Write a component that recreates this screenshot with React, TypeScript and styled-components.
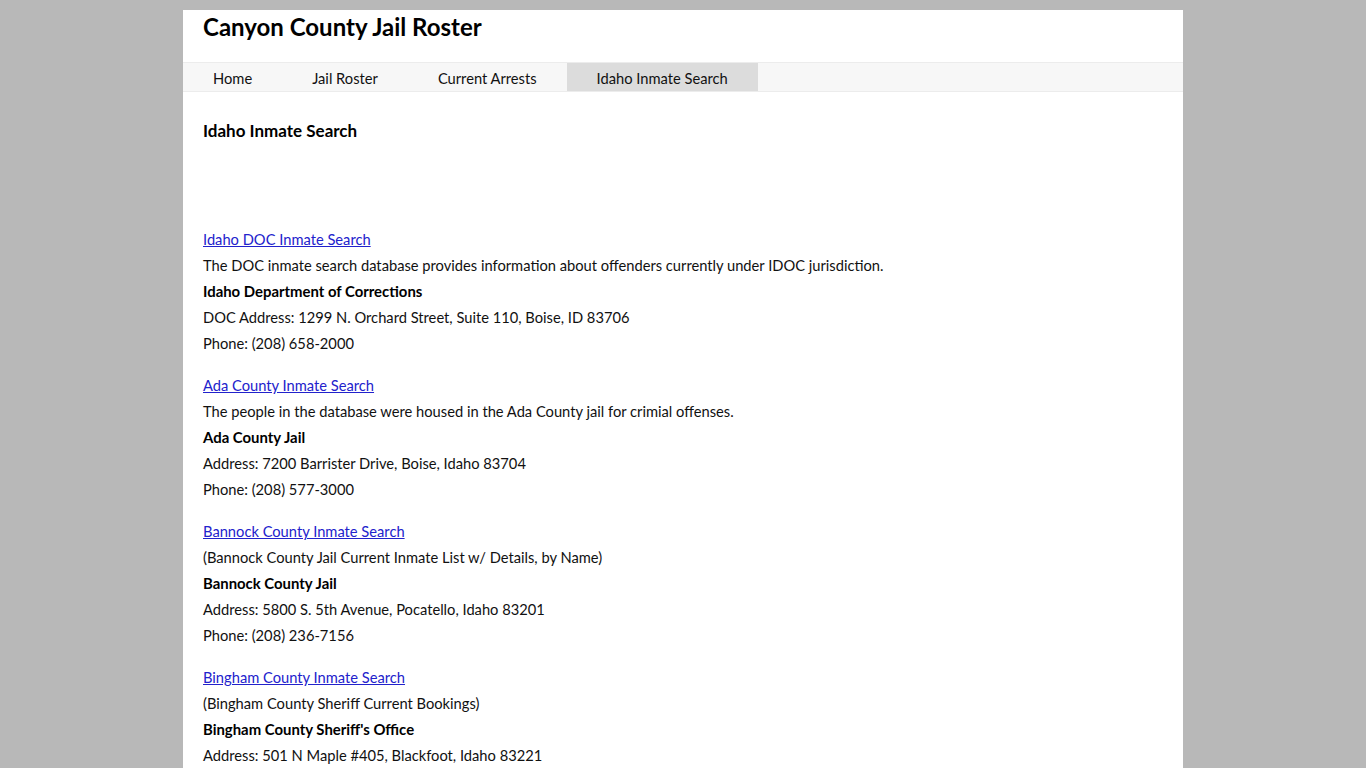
import React from "react";
import styled, { createGlobalStyle } from "styled-components";

const GlobalStyle = createGlobalStyle`
  html, body {
    margin: 0;
    padding: 0;
    background: #b8b8b8;
  }
  body {
    font-family: Lato, "Open Sans", "Liberation Sans", sans-serif;
    color: #111;
  }
`;

const Page = styled.div`
  width: 1000px;
  margin: 10px auto 0;
  background: #fff;
  min-height: 758px;
`;

const Header = styled.header`
  height: 52px;
  padding: 0 20px;
  display: flex;
  align-items: flex-start;
`;

const SiteTitle = styled.h1`
  margin: 2px 0 0;
  font-size: 24px;
  font-weight: 700;
  color: #000;
  line-height: 30px;
`;

const Nav = styled.nav`
  display: flex;
  height: 28px;
  background: #f7f7f7;
  border-top: 1px solid #ececec;
  border-bottom: 1px solid #ececec;
`;

const NavItem = styled.a<{ $active?: boolean }>`
  display: flex;
  align-items: center;
  padding: 2px 30px 0;
  font-size: 14.7px;
  color: #111;
  text-decoration: none;
  background: ${(p) => (p.$active ? "#dcdcdc" : "transparent")};
  cursor: pointer;
`;

const Content = styled.main`
  padding: 20px 20px 0;
`;

const Heading = styled.h2`
  margin: 9px 0 0;
  font-size: 17px;
  font-weight: 700;
  line-height: 20px;
  color: #000;
`;

const List = styled.div`
  margin-top: 85px;
  display: flex;
  flex-direction: column;
  gap: 16px;
`;

const Entry = styled.section`
  display: flex;
  flex-direction: column;
`;

const Line = styled.div<{ $bold?: boolean }>`
  font-size: ${(p) => (p.$bold ? "14.9px" : "14.7px")};
  line-height: 26px;
  font-weight: ${(p) => (p.$bold ? 700 : 400)};
  color: ${(p) => (p.$bold ? "#000" : "#111")};
  white-space: nowrap;
`;

const EntryLink = styled.a`
  font-size: 14.7px;
  line-height: 26px;
  color: #2222cc;
  text-decoration: underline;
  align-self: flex-start;
`;

type Facility = {
  link: string;
  note: string;
  name: string;
  address: string;
  phone?: string;
};

const facilities: Facility[] = [
  {
    link: "Idaho DOC Inmate Search",
    note: "The DOC inmate search database provides information about offenders currently under IDOC jurisdiction.",
    name: "Idaho Department of Corrections",
    address: "DOC Address: 1299 N. Orchard Street, Suite 110, Boise, ID 83706",
    phone: "Phone: (208) 658-2000",
  },
  {
    link: "Ada County Inmate Search",
    note: "The people in the database were housed in the Ada County jail for crimial offenses.",
    name: "Ada County Jail",
    address: "Address: 7200 Barrister Drive, Boise, Idaho 83704",
    phone: "Phone: (208) 577-3000",
  },
  {
    link: "Bannock County Inmate Search",
    note: "(Bannock County Jail Current Inmate List w/ Details, by Name)",
    name: "Bannock County Jail",
    address: "Address: 5800 S. 5th Avenue, Pocatello, Idaho 83201",
    phone: "Phone: (208) 236-7156",
  },
  {
    link: "Bingham County Inmate Search",
    note: "(Bingham County Sheriff Current Bookings)",
    name: "Bingham County Sheriff's Office",
    address: "Address: 501 N Maple #405, Blackfoot, Idaho 83221",
  },
];

const navItems = ["Home", "Jail Roster", "Current Arrests", "Idaho Inmate Search"];

export default function App() {
  return (
    <>
      <GlobalStyle />
      <Page>
        <Header>
          <SiteTitle>Canyon County Jail Roster</SiteTitle>
        </Header>
        <Nav>
          {navItems.map((item) => (
            <NavItem key={item} $active={item === "Idaho Inmate Search"}>
              {item}
            </NavItem>
          ))}
        </Nav>
        <Content>
          <Heading>Idaho Inmate Search</Heading>
          <List>
            {facilities.map((f) => (
              <Entry key={f.link}>
                <EntryLink href="#">{f.link}</EntryLink>
                <Line>{f.note}</Line>
                <Line $bold>{f.name}</Line>
                <Line>{f.address}</Line>
                {f.phone && <Line>{f.phone}</Line>}
              </Entry>
            ))}
          </List>
        </Content>
      </Page>
    </>
  );
}
